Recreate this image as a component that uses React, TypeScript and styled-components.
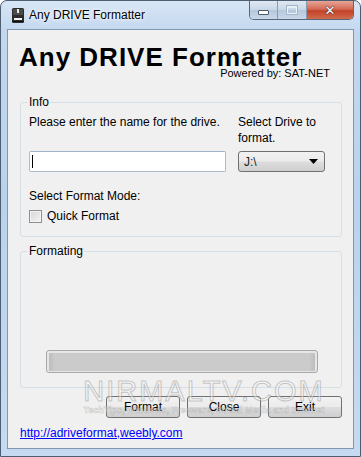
import React from "react";
import styled, { createGlobalStyle } from "styled-components";

const GlobalStyle = createGlobalStyle`
  html, body {
    margin: 0;
    padding: 0;
    background: #ffffff;
  }
  body {
    font-family: "Liberation Sans", Arial, sans-serif;
    font-size: 12px;
    color: #000;
  }
`;

const DriveIcon = () => (
  <svg width="16" height="17" viewBox="0 0 16 17">
    <rect x="2" y="1" width="12" height="15" rx="1.5" fill="#2b2b2b" />
    <rect x="3" y="2" width="10" height="6" fill="#4a4a4a" />
    <rect x="7" y="2" width="2" height="4" fill="#e8e8e8" />
    <rect x="4" y="11" width="8" height="2" fill="#f4f4f4" />
    <rect x="2" y="14" width="12" height="1" fill="#111" />
  </svg>
);

const Arrow = () => (
  <svg width="9" height="5" viewBox="0 0 9 5">
    <path d="M0 0 H9 L4.5 5 Z" fill="#000" />
  </svg>
);

const App = () => {
  return (
    <>
      <GlobalStyle />
      <Window>
        <TitleBar>
          <DriveIcon />
          <TitleText>Any DRIVE Formatter</TitleText>
          <CaptionGroup>
            <CaptionBtn $w={27}>
              <MinGlyph />
            </CaptionBtn>
            <CaptionBtn $w={28}>
              <MaxGlyph />
            </CaptionBtn>
            <CloseBtn>
              <CloseGlyph>✕</CloseGlyph>
            </CloseBtn>
          </CaptionGroup>
        </TitleBar>
        <Client>
          <BigTitle>Any DRIVE Formatter</BigTitle>
          <Powered>Powered by: SAT-NET</Powered>

          <Group $pb={13}>
            <Legend>Info</Legend>
            <InfoGrid>
              <Label>Please enter the name for the drive.</Label>
              <Label>
                Select Drive to
                <br />
                format.
              </Label>
              <TextBox>
                <Caret />
              </TextBox>
              <Combo>
                <span>J:\</span>
                <Arrow />
              </Combo>
            </InfoGrid>
            <ModeLabel>Select Format Mode:</ModeLabel>
            <CheckRow>
              <CheckBox />
              <span>Quick Format</span>
            </CheckRow>
          </Group>

          <Group $pb={14} $gap={7}>
            <Legend>Formating</Legend>
            <Progress>
              <ProgressFill />
            </Progress>
          </Group>

          <ButtonRow>
            <Button>Format</Button>
            <Button>Close</Button>
            <Button>Exit</Button>
          </ButtonRow>

          <Link href="#">http://adriveformat,weebly.com</Link>
        </Client>

        <Watermark>
          <MarkBig>NIRMALTV.COM</MarkBig>
          <MarkSmall>TechTips, Windows, Freeware, Social Media and Internet</MarkSmall>
        </Watermark>
      </Window>
    </>
  );
};

const Window = styled.div`
  position: relative;
  box-sizing: border-box;
  width: 361px;
  height: 457px;
  display: flex;
  flex-direction: column;
  padding: 0 6px 7px 6px;
  border: 1px solid #4d5d72;
  border-radius: 7px 7px 0 0;
  background: linear-gradient(
    to bottom,
    #d8e6f5 0px,
    #c3d8ef 30px,
    #b9d2ed 200px,
    #c6dbf1 457px
  );
  overflow: hidden;
`;

const TitleBar = styled.div`
  height: 28px;
  display: flex;
  align-items: flex-start;
  padding-left: 3px;
  svg {
    margin-top: 6px;
    flex-shrink: 0;
  }
`;

const TitleText = styled.div`
  margin-left: 3px;
  margin-top: 7px;
  font-family: "Liberation Sans", Arial, sans-serif;
  font-size: 12px;
  line-height: 15px;
  color: #000;
  text-shadow: 0 0 6px #ffffff, 0 0 3px #ffffff;
`;

const CaptionGroup = styled.div`
  margin-left: auto;
  display: flex;
  height: 18px;
  border: 1px solid #58677c;
  border-top: none;
  border-radius: 0 0 5px 5px;
  overflow: hidden;
`;

const CaptionBtn = styled.div<{ $w: number }>`
  width: ${(p) => p.$w}px;
  display: flex;
  align-items: center;
  justify-content: center;
  background: linear-gradient(to bottom, #dfe8f3 0%, #c8d6e6 50%, #b5c7dc 51%, #c9d8ea 100%);
  border-right: 1px solid #8a9bb0;
`;

const MinGlyph = styled.div`
  width: 9px;
  height: 3px;
  margin-top: 5px;
  background: #fff;
  border: 1px solid #4c5a6c;
  border-radius: 1px;
`;

const MaxGlyph = styled.div`
  width: 8px;
  height: 5px;
  border: 1px solid #e9eff6;
  border-top-width: 2px;
  outline: 1px solid #a6b5c7;
`;

const CloseBtn = styled.div`
  width: 46px;
  display: flex;
  align-items: center;
  justify-content: center;
  background: linear-gradient(to bottom, #e7a596 0%, #d46a55 45%, #c24329 55%, #d26a4e 100%);
`;

const CloseGlyph = styled.span`
  font-family: "DejaVu Sans", sans-serif;
  font-weight: bold;
  font-size: 13px;
  line-height: 13px;
  color: #ffffff;
  text-shadow: 0 0 1px #4a2a22, 0 0 1px #4a2a22, 0 0 1px #4a2a22;
`;

const Client = styled.div`
  flex: 1;
  display: flex;
  flex-direction: column;
  padding: 12px 11px 0 12px;
  background: #f0f0f0;
  border: 1px solid #8297b0;
  overflow: hidden;
`;

const BigTitle = styled.div`
  margin-left: -1px;
  font-family: "Liberation Sans", Arial, sans-serif;
  font-weight: bold;
  font-size: 26px;
  line-height: 30px;
  letter-spacing: 1px;
  color: #000;
`;

const Powered = styled.div`
  margin-top: -5px;
  padding-right: 12px;
  text-align: right;
  font-size: 11px;
  line-height: 13px;
`;

const Group = styled.fieldset<{ $pb: number; $gap?: number }>`
  margin: ${(p) => p.$gap ?? 15}px 0 0 0;
  padding: 5px 8px ${(p) => p.$pb}px 8px;
  border: 1px solid #d5dfe5;
  border-radius: 3px;
  min-width: 0;
`;

const Legend = styled.legend`
  margin-left: -2px;
  padding: 0 1px 0 2px;
  font-size: 12px;
  line-height: 14px;
`;

const InfoGrid = styled.div`
  display: grid;
  grid-template-columns: 197px 87px;
  column-gap: 12px;
  row-gap: 5px;
`;

const Label = styled.div`
  font-size: 12px;
  line-height: 16px;
`;

const TextBox = styled.div`
  box-sizing: border-box;
  height: 21px;
  background: #fff;
  border: 1px solid #a9bbcf;
  border-top-color: #9fb1c6;
  border-radius: 2px;
  display: flex;
  align-items: center;
  padding-left: 2px;
`;

const Caret = styled.div`
  width: 1px;
  height: 13px;
  background: #000;
`;

const Combo = styled.div`
  box-sizing: border-box;
  height: 21px;
  display: flex;
  align-items: center;
  justify-content: space-between;
  padding: 0 6px 0 5px;
  border: 1px solid #707070;
  border-radius: 3px;
  background: linear-gradient(to bottom, #f2f2f2 0%, #ebebeb 48%, #dddddd 52%, #cfcfcf 100%);
  font-size: 12px;
  color: #1c1c1c;
`;

const ModeLabel = styled.div`
  margin-top: 16px;
  font-size: 12px;
  line-height: 16px;
`;

const CheckRow = styled.div`
  margin-top: 6px;
  display: flex;
  align-items: center;
  gap: 5px;
  font-size: 12px;
  line-height: 13px;
`;

const CheckBox = styled.div`
  box-sizing: border-box;
  width: 13px;
  height: 13px;
  border: 1px solid #8e8f8f;
  background: linear-gradient(135deg, #d6d6d6 0%, #f4f4f4 100%);
  box-shadow: inset 0 0 0 1px #f4f4f4;
`;

const Progress = styled.div`
  box-sizing: border-box;
  margin: 87px 15px 0 17px;
  height: 23px;
  border: 1px solid #a8a8a8;
  border-radius: 3px;
  background: #e6e6e6;
  padding: 2px 2px 1px 2px;
`;

const ProgressFill = styled.div`
  height: 100%;
  border-radius: 1px;
  background: linear-gradient(to right, #bdbdbd 0px, #cbcbcb 6px, #cbcbcb calc(100% - 6px), #bdbdbd 100%);
`;

const ButtonRow = styled.div`
  margin-top: 8px;
  display: flex;
  justify-content: flex-end;
  gap: 7px;
`;

const Button = styled.button`
  box-sizing: border-box;
  width: 74px;
  height: 22px;
  padding: 0;
  border: 1px solid #707070;
  border-radius: 3px;
  background: linear-gradient(to bottom, #f2f2f2 0%, #ebebeb 48%, #dddddd 52%, #cfcfcf 100%);
  font-family: "Liberation Sans", Arial, sans-serif;
  font-size: 12px;
  color: #000;
`;

const Link = styled.a`
  margin-top: 8px;
  align-self: flex-start;
  font-size: 12px;
  line-height: 15px;
  color: #0000ff;
  text-decoration: underline;
`;

const Watermark = styled.div`
  position: absolute;
  left: 86px;
  top: 376px;
  width: 234px;
  display: flex;
  flex-direction: column;
  align-items: center;
  pointer-events: none;
  opacity: 0.5;
`;

const MarkBig = styled.div`
  font-family: "Liberation Sans", Arial, sans-serif;
  font-size: 29px;
  line-height: 28px;
  letter-spacing: 2px;
  color: #ffffff;
  -webkit-text-stroke: 1px #9a9a9a;
`;

const MarkSmall = styled.div`
  margin-top: 0px;
  font-family: "Liberation Sans", Arial, sans-serif;
  font-weight: bold;
  font-size: 9px;
  line-height: 11px;
  color: #ffffff;
  -webkit-text-stroke: 0.5px #9a9a9a;
  white-space: nowrap;
`;

export default App;
